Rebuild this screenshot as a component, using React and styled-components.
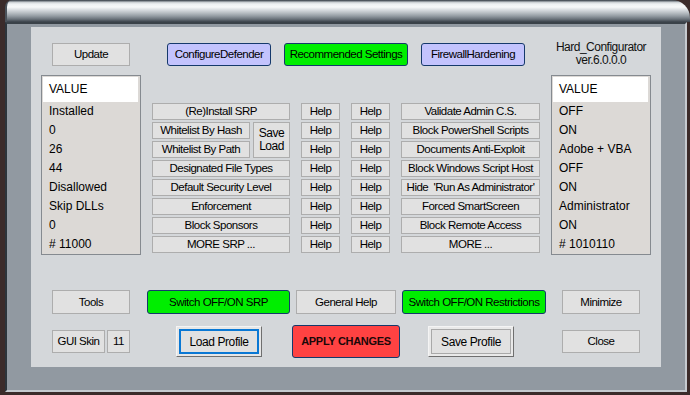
import React from 'react';
import styled, { createGlobalStyle, css } from 'styled-components';

const GlobalStyle = createGlobalStyle`
  html, body {
    margin: 0;
    padding: 0;
  }
  body {
    width: 690px;
    height: 395px;
    overflow: hidden;
    background: #3b2b2a;
    font-family: 'Liberation Sans', Arial, sans-serif;
  }
`;

const srpRows = [
  'Designated File Types',
  'Default Security Level',
  'Enforcement',
  'Block Sponsors',
  'MORE SRP ...',
];

const rightButtons = [
  'Validate Admin C.S.',
  'Block PowerShell Scripts',
  'Documents Anti-Exploit',
  'Block Windows Script Host',
  "Hide  'Run As Administrator'",
  'Forced SmartScreen',
  'Block Remote Access',
  'MORE ...',
];

const leftValues = ['Installed', '0', '26', '44', 'Disallowed', 'Skip DLLs', '0', '# 11000'];
const rightValues = ['OFF', 'ON', 'Adobe + VBA', 'OFF', 'ON', 'Administrator', 'ON', '# 1010110'];

const App = () => {
  return (
    <>
      <GlobalStyle />
      <Window>
        <TitleBar />
        <Frame>
          <Panel>
            <TopRow>
              <Btn $w={78} $h={23}>Update</Btn>
              <Btn $w={104} $h={23} $ml={37} $tone='blue'>ConfigureDefender</Btn>
              <Btn $w={124} $h={23} $ml={13} $tone='green'>Recommended Settings</Btn>
              <Btn $w={104} $h={23} $ml={13} $tone='blue'>FirewallHardening</Btn>
              <Version>
                Hard_Configurator
                <br />
                ver.6.0.0.0
              </Version>
            </TopRow>

            <MidRow>
              <ValueList>
                <ListHead>VALUE</ListHead>
                {leftValues.map((v, i) => (
                  <ListItem key={i}>{v}</ListItem>
                ))}
              </ValueList>

              <SrpGrid>
                <Btn $w={138} $span>(Re)Install SRP</Btn>
                <Btn $w={98}>Whitelist By Hash</Btn>
                <Btn $w={37} $h={36} $tall>
                  Save
                  <br />
                  Load
                </Btn>
                <Btn $w={98}>Whitelist By Path</Btn>
                {srpRows.map((t) => (
                  <Btn key={t} $w={138} $span>
                    {t}
                  </Btn>
                ))}
              </SrpGrid>

              <BtnColumn>
                {Array.from({ length: 8 }).map((_, i) => (
                  <Btn key={i} $w={39}>Help</Btn>
                ))}
              </BtnColumn>

              <BtnColumn>
                {Array.from({ length: 8 }).map((_, i) => (
                  <Btn key={i} $w={39}>Help</Btn>
                ))}
              </BtnColumn>

              <BtnColumn>
                {rightButtons.map((t) => (
                  <Btn key={t} $w={139}>
                    {t}
                  </Btn>
                ))}
              </BtnColumn>

              <ValueList>
                <ListHead>VALUE</ListHead>
                {rightValues.map((v, i) => (
                  <ListItem key={i}>{v}</ListItem>
                ))}
              </ValueList>
            </MidRow>

            <BottomRow>
              <Btn $w={78} $h={24}>Tools</Btn>
              <Btn $w={143} $h={24} $ml={17} $tone='green'>Switch OFF/ON SRP</Btn>
              <Btn $w={100} $h={24} $ml={6}>General Help</Btn>
              <Btn $w={144} $h={24} $ml={6} $tone='green'>Switch OFF/ON Restrictions</Btn>
              <Btn $w={78} $h={24} $ml={16}>Minimize</Btn>
            </BottomRow>

            <ActionRow>
              <Btn $w={53} $h={23}>GUI Skin</Btn>
              <Btn $w={23} $h={23} $ml={2}>11</Btn>
              <BevelBtn $w={86} $ml={46} $focus>Load Profile</BevelBtn>
              <Btn $w={108} $h={33} $ml={30} $tone='red' $bold>APPLY CHANGES</Btn>
              <BevelBtn $w={86} $ml={28}>Save Profile</BevelBtn>
              <Btn $w={78} $h={23} $ml={48}>Close</Btn>
            </ActionRow>
          </Panel>
        </Frame>
      </Window>
    </>
  );
};

export default App;

const Window = styled.div`
  width: 690px;
  height: 395px;
  display: flex;
  flex-direction: column;
`;

const TitleBar = styled.div`
  height: 22px;
  margin-left: 5px;
  border-radius: 7px 18px 0 0;
  border-left: 2px solid #4a525a;
  background: linear-gradient(
    to bottom,
    #3c434b 0px,
    #626a72 1px,
    #c4c9cd 2px,
    #eef1f3 4px,
    #f7f9fa 7px,
    #d7dbdf 10px,
    #b7bdc2 13px,
    #949ca3 16px,
    #6c747c 19px,
    #3a424a 22px
  );
`;

const Frame = styled.div`
  width: 682px;
  margin-left: 5px;
  box-sizing: border-box;
  padding: 3px 24px 23px 24px;
  background: #9199a1;
  border-top: 2px solid #3a4249;
  border-left: 2px solid #2c343b;
  border-right: 2px solid #c5cacf;
  border-bottom: 2px solid #c5cacf;
`;

const Panel = styled.div`
  width: 630px;
  height: 340px;
  box-sizing: border-box;
  padding: 16px 10px 0;
  background: #d4d7da;
  display: flex;
  flex-direction: column;
`;

const TopRow = styled.div`
  display: flex;
  align-items: flex-start;
  padding-left: 11px;
  height: 23px;
`;

const Version = styled.div`
  width: 100px;
  margin-left: 26px;
  margin-top: -2px;
  text-align: center;
  font-size: 12px;
  line-height: 13px;
  letter-spacing: -0.5px;
  color: #111;
`;

const MidRow = styled.div`
  display: flex;
  align-items: flex-start;
  justify-content: space-between;
  margin-top: 9px;
`;

const ValueList = styled.div`
  width: 100px;
  height: 180px;
  box-sizing: border-box;
  border: 1px solid #858a90;
  padding: 1px;
  background: #dcd9d6;
  flex-shrink: 0;
`;

const ListHead = styled.div`
  height: 25px;
  line-height: 25px;
  margin-right: 1px;
  padding-left: 6px;
  background: #ffffff;
  font-size: 12px;
  color: #000;
`;

const ListItem = styled.div`
  height: 19px;
  line-height: 19px;
  padding-left: 6px;
  font-size: 12px;
  color: #000;
  white-space: nowrap;
`;

const SrpGrid = styled.div`
  margin-top: 28px;
  display: grid;
  grid-template-columns: 98px 37px;
  grid-auto-rows: 17px;
  column-gap: 3px;
  row-gap: 2px;
`;

const BtnColumn = styled.div`
  margin-top: 28px;
  display: flex;
  flex-direction: column;
  gap: 2px;
`;

const tones = {
  blue: '#c3c3fd',
  green: '#00ee00',
  red: '#ff4242',
};

const Btn = styled.div`
  box-sizing: border-box;
  width: ${(p) => p.$w}px;
  height: ${(p) => p.$h || 17}px;
  margin-left: ${(p) => p.$ml || 0}px;
  flex-shrink: 0;
  display: flex;
  align-items: center;
  justify-content: center;
  text-align: center;
  white-space: pre;
  background: #e1e1e1;
  border: 1px solid #adadad;
  font-size: 11.5px;
  line-height: 13px;
  letter-spacing: -0.5px;
  color: #000;

  ${(p) =>
    p.$span &&
    css`
      grid-column: span 2;
    `}

  ${(p) =>
    p.$tall &&
    css`
      grid-row: span 2;
      white-space: normal;
      font-size: 12px;
    `}

  ${(p) =>
    p.$tone &&
    css`
      background: ${tones[p.$tone]};
      border-color: #15396b;
      border-radius: 3px;
    `}

  ${(p) =>
    p.$bold &&
    css`
      font-size: 11px;
      font-weight: bold;
      letter-spacing: -0.3px;
      color: #1a0808;
    `}
`;

const BevelBtn = styled.div`
  box-sizing: border-box;
  width: ${(p) => p.$w}px;
  height: 31px;
  margin-left: ${(p) => p.$ml || 0}px;
  flex-shrink: 0;
  display: flex;
  align-items: center;
  justify-content: center;
  background: #e1e1e1;
  border: 1px solid;
  border-color: #f4f4f4 #6f6f6f #6f6f6f #f4f4f4;
  font-size: 12px;
  letter-spacing: -0.4px;
  color: #000;
  box-shadow: ${(p) =>
    p.$focus
      ? 'inset 0 0 0 2px #e6e6e6, inset 0 0 0 4px #0a78d4'
      : 'inset 0 0 0 2px #e9e9e9, inset 0 0 0 3px #a9a9a9'};
`;

const BottomRow = styled.div`
  display: flex;
  align-items: flex-start;
  padding-left: 11px;
  margin-top: 35px;
  height: 24px;
`;

const ActionRow = styled.div`
  display: flex;
  align-items: center;
  padding-left: 11px;
  margin-top: 11px;
  height: 33px;
`;
